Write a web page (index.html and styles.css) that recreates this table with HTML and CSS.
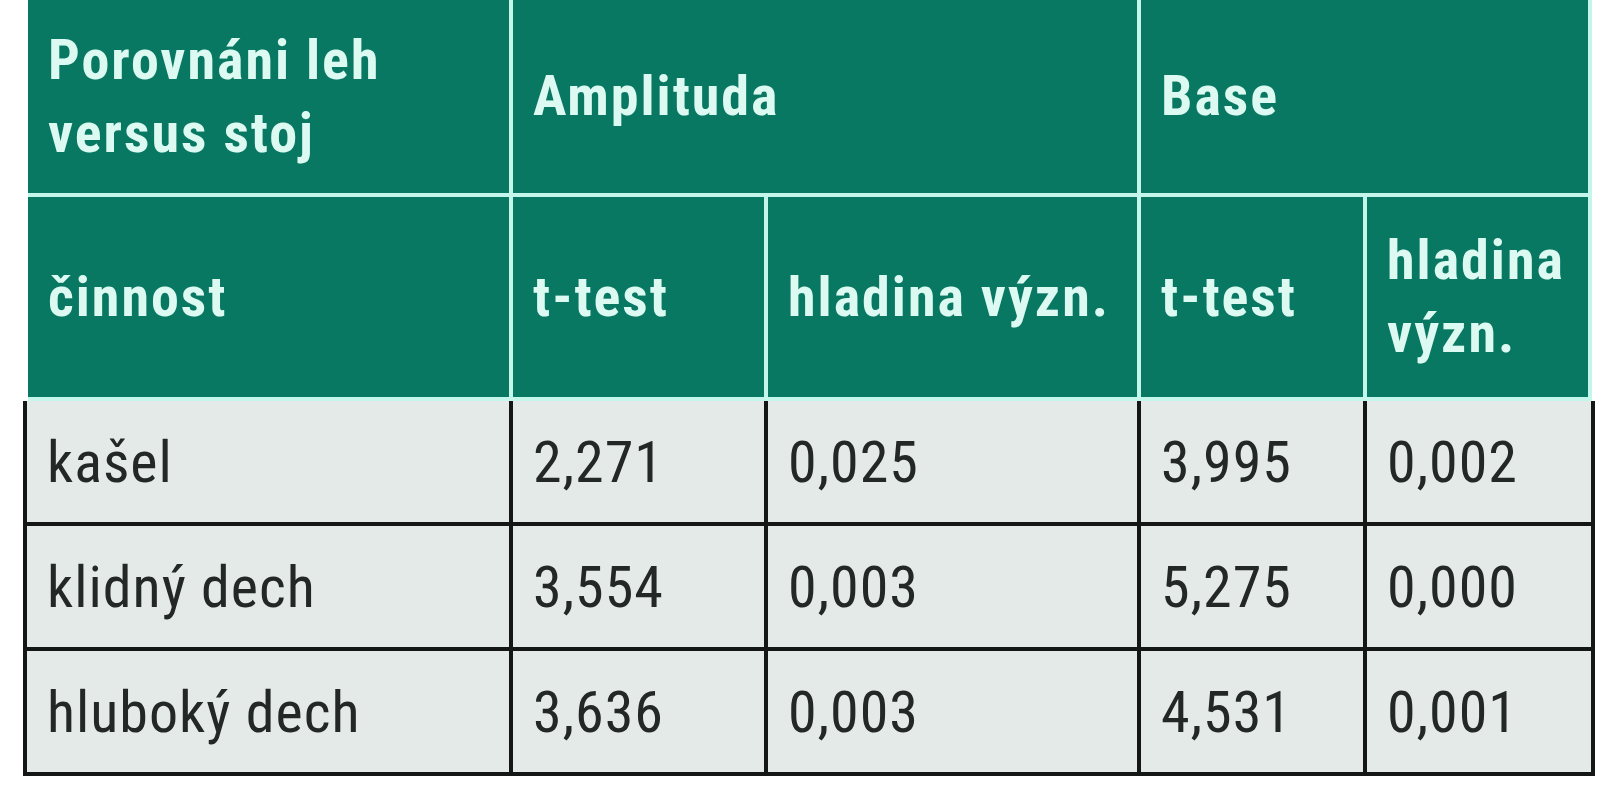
FILE: index.html
```html
<!DOCTYPE html>
<html lang="cs">
<head>
<meta charset="utf-8">
<title>Porovnání leh versus stoj</title>
<link rel="stylesheet" href="styles.css">
</head>
<body>
<div class="table">
  <div class="thead">
    <div class="th">Porovnáni leh versus stoj</div>
    <div class="th span2">Amplituda</div>
    <div class="th span2">Base</div>
    <div class="th">činnost</div>
    <div class="th">t-test</div>
    <div class="th">hladina význ.</div>
    <div class="th">t-test</div>
    <div class="th">hladina význ.</div>
  </div>
  <div class="tbody">
    <div class="td">kašel</div>
    <div class="td">2,271</div>
    <div class="td">0,025</div>
    <div class="td">3,995</div>
    <div class="td">0,002</div>

    <div class="td">klidný dech</div>
    <div class="td">3,554</div>
    <div class="td">0,003</div>
    <div class="td">5,275</div>
    <div class="td">0,000</div>

    <div class="td">hluboký dech</div>
    <div class="td">3,636</div>
    <div class="td">0,003</div>
    <div class="td">4,531</div>
    <div class="td">0,001</div>
  </div>
</div>
</body>
</html>
```
FILE: styles.css
```css
html, body {
  margin: 0;
  padding: 0;
  background: #ffffff;
}

body {
  font-family: "Roboto Condensed", "Roboto", "DejaVu Sans", sans-serif;
  font-stretch: condensed;
}

.table {
  margin-left: 23px;
  width: 1572px;
}

.thead {
  display: grid;
  grid-template-columns: 481px 251px 369px 222px 221px;
  grid-template-rows: 193px 200px;
  column-gap: 4px;
  row-gap: 4px;
  margin-left: 5px;
  padding: 0 4px 4px 0;
  width: max-content;
  background: #c4f6ec;
}

.th {
  background: #087862;
  color: #dcfaf2;
  font-weight: 700;
  font-size: 56px;
  line-height: 73px;
  letter-spacing: 2px;
  padding: 0 8px 0 20px;
  display: flex;
  align-items: center;
}

.span2 {
  grid-column: span 2;
}

.tbody {
  display: grid;
  grid-template-columns: 482px 251px 369px 222px 224px;
  grid-auto-rows: 121px;
  column-gap: 4px;
  row-gap: 4px;
  padding: 0 4px 4px 4px;
  width: max-content;
  background: #141716;
}

.td {
  background: #e3eae8;
  color: #232826;
  font-weight: 400;
  font-size: 58px;
  line-height: 1;
  letter-spacing: 1px;
  padding: 0 12px 0 20px;
  display: flex;
  align-items: center;
}
```
